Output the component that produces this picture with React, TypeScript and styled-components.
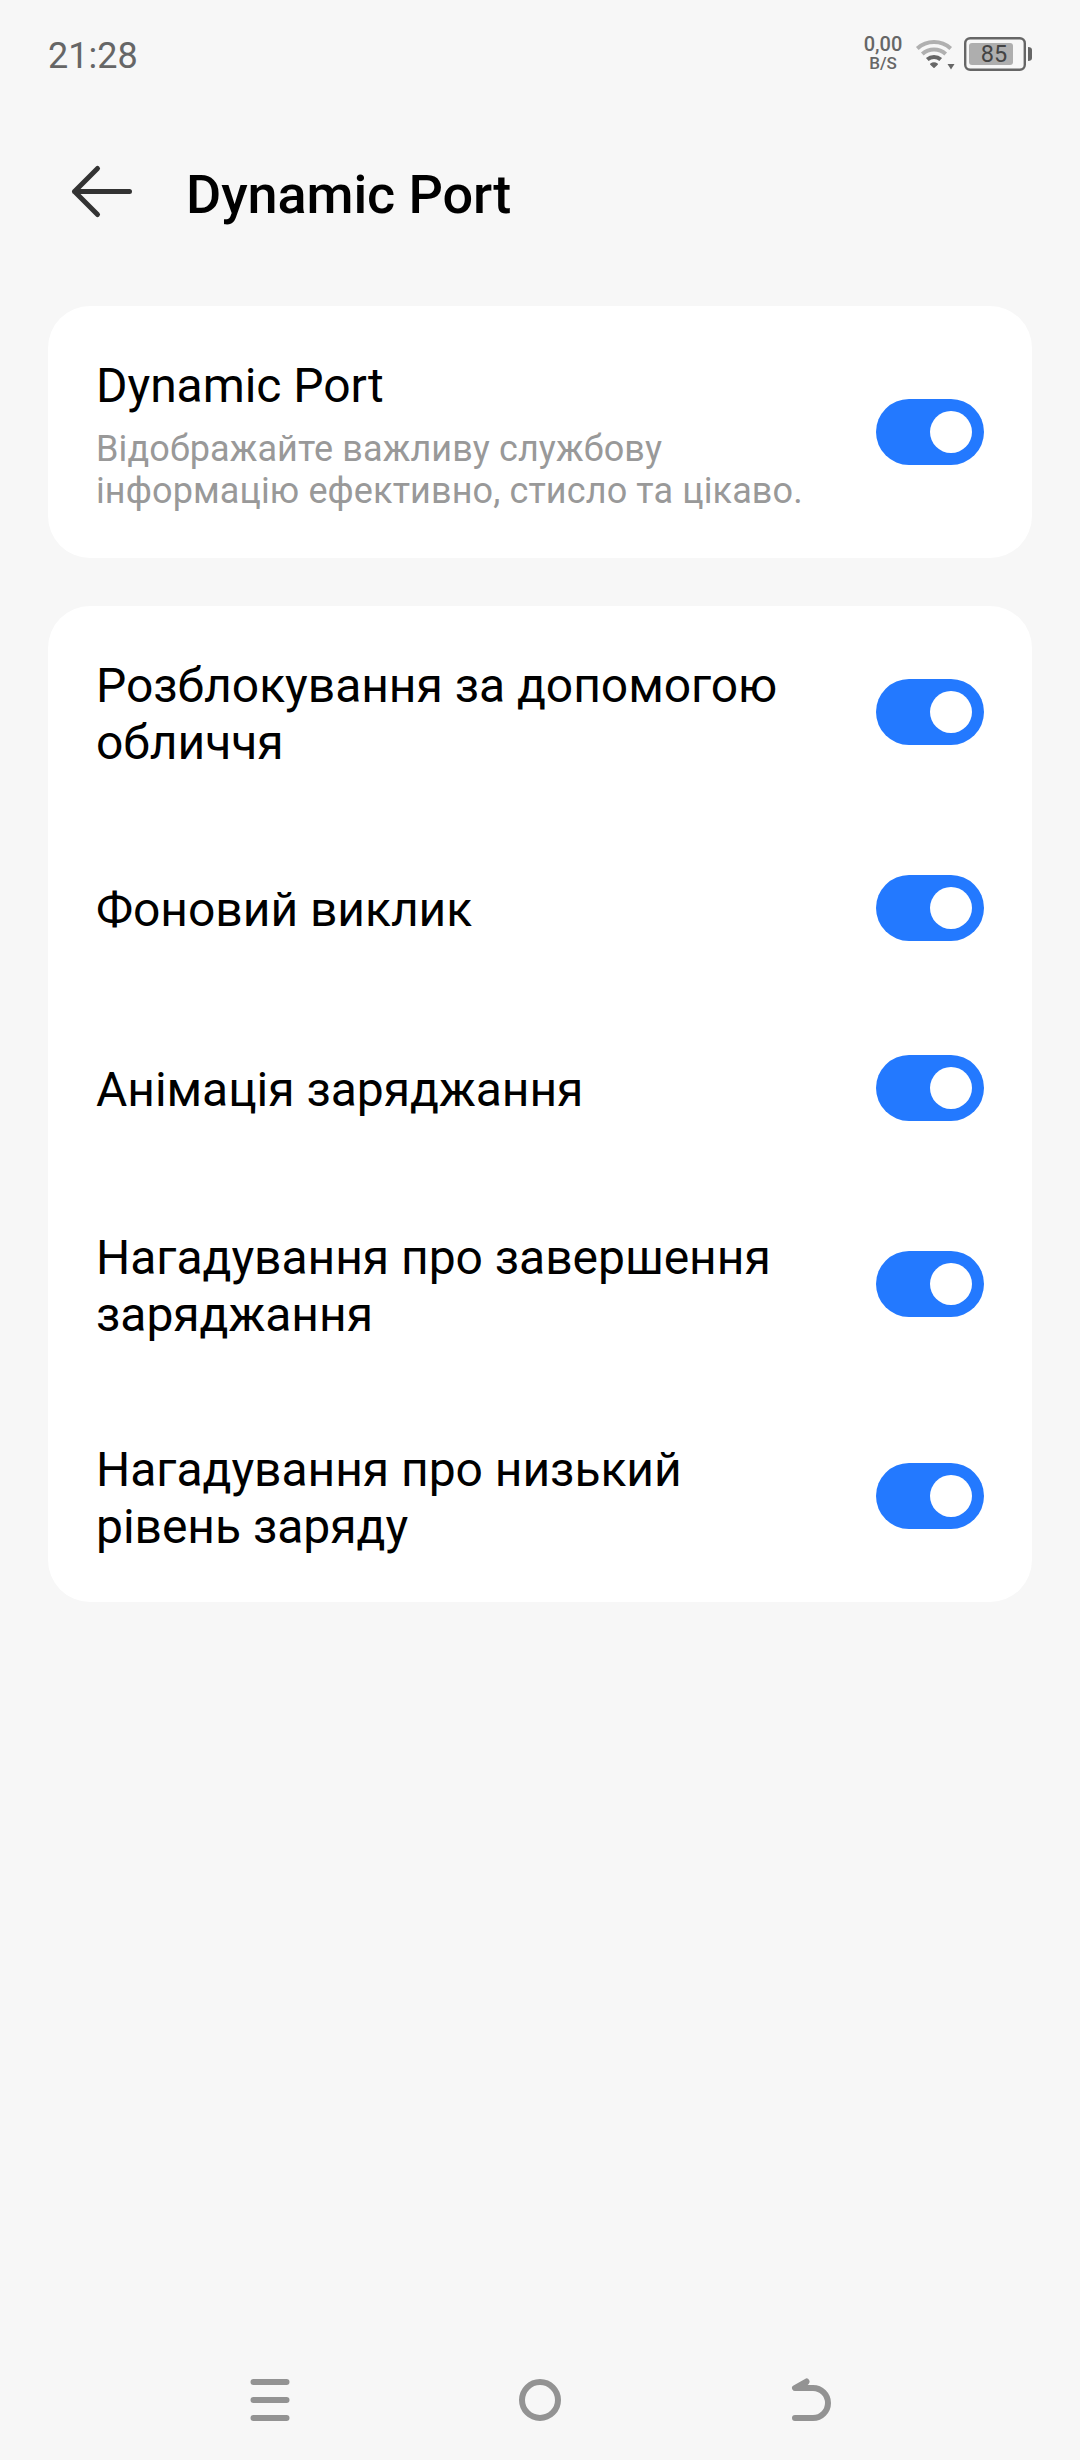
import React, { useState } from "react";
import styled, { createGlobalStyle } from "styled-components";

const GlobalStyle = createGlobalStyle`
  * { box-sizing: border-box; }
  body { margin: 0; background: #f7f7f7; }
`;

const Screen = styled.div`
  display: flex;
  flex-direction: column;
  width: 1080px;
  height: 2460px;
  background: #f7f7f7;
  color: #000;
  font-family: Roboto, "Noto Sans", sans-serif;
`;

const StatusBar = styled.header`
  display: flex;
  justify-content: space-between;
  align-items: center;
  height: 108px;
  padding: 0 48px;
  color: #666;
`;

const Clock = styled.time`
  font-size: 36px;
  line-height: 42px;
  padding-top: 4px;
`;

const StatusIcons = styled.div`
  display: flex;
  align-items: center;
  gap: 8px;
`;

const NetSpeed = styled.div`
  display: flex;
  flex-direction: column;
  align-items: center;
  width: 42px;
  padding-bottom: 2px;
  font-weight: 500;
`;

const SpeedValue = styled.span`
  font-size: 20px;
  line-height: 20px;
`;

const SpeedUnit = styled.span`
  font-size: 17px;
  line-height: 18px;
`;

const TitleBar = styled.div`
  display: flex;
  align-items: center;
  height: 168px;
  padding-left: 66px;
`;

const BackButton = styled.button`
  display: flex;
  width: 72px;
  height: 72px;
  padding: 0;
  border: 0;
  background: none;
  margin: 0 48px 0 0;
`;

const Title = styled.h1`
  margin: 0;
  padding-top: 6px;
  font-size: 54px;
  line-height: 64px;
  font-weight: 500;
  letter-spacing: -0.1px;
`;

const Content = styled.main`
  display: flex;
  flex: 1;
  flex-direction: column;
  gap: 48px;
  padding: 30px 48px 0;
`;

const Card = styled.section`
  border-radius: 42px;
  background: #fff;
`;

const Row = styled.div<{ $height: number }>`
  display: flex;
  align-items: center;
  justify-content: space-between;
  height: ${(p) => p.$height}px;
  padding: 0 48px;
`;

const Texts = styled.div<{ $top: number }>`
  width: 732px;
  padding-top: ${(p) => p.$top}px;
`;

const Label = styled.div`
  font-size: 48px;
  line-height: 57px;
  letter-spacing: -0.04px;
`;

const Summary = styled.div`
  margin-top: 14px;
  font-size: 36px;
  line-height: 42px;
  letter-spacing: 0.12px;
  color: #999;
`;

const Track = styled.button<{ $on: boolean }>`
  display: flex;
  align-items: center;
  justify-content: ${(p) => (p.$on ? "flex-end" : "flex-start")};
  width: 108px;
  height: 66px;
  padding: 0 12px;
  border: 0;
  border-radius: 33px;
  background: ${(p) => (p.$on ? "#2379ff" : "#ddd")};
`;

const Knob = styled.span`
  width: 42px;
  height: 42px;
  border-radius: 50%;
  background: #fff;
`;

const NavBar = styled.nav`
  display: flex;
  align-items: center;
  justify-content: space-around;
  height: 120px;
  padding: 0 135px;
`;

const NavButton = styled.button`
  display: flex;
  padding: 0;
  border: 0;
  background: none;
`;

function Switch() {
  const [on, setOn] = useState(true);
  return (
    <Track $on={on} role="switch" aria-checked={on} onClick={() => setOn(!on)}>
      <Knob />
    </Track>
  );
}

const options = [
  { label: "Розблокування за допомогою обличчя", height: 212, top: 4 },
  { label: "Фоновий виклик", height: 180, top: 3 },
  { label: "Анімація заряджання", height: 180, top: 3 },
  { label: "Нагадування про завершення заряджання", height: 212, top: 4 },
  { label: "Нагадування про низький рівень заряду", height: 212, top: 4 },
];

const WifiIcon = () => (
  <svg width="44" height="36" viewBox="0 0 44 36" fill="none">
    <path d="M5.300 12.400A25 25 0 0 1 38.700 12.400" stroke="#b0b0b0" strokeWidth="4" />
    <path d="M10.300 18A17.500 17.500 0 0 1 33.700 18" stroke="#b0b0b0" strokeWidth="4" />
    <path d="M15.300 23.600A10 10 0 0 1 28.700 23.600" stroke="#666" strokeWidth="4" />
    <path d="M18.800 28.200q3.200-2.400 6.400 0L22 31.200z" fill="#666" stroke="#666" strokeWidth="1.500" strokeLinejoin="round" />
    <path d="M35.500 28h7l-3.500 5.500z" fill="#666" />
  </svg>
);

const BatteryIcon = () => (
  <svg width="68" height="36" viewBox="0 0 68 36">
    <rect x="1.200" y="2.200" width="59.600" height="31.600" rx="5" fill="none" stroke="#666" strokeWidth="2.400" />
    <rect x="5" y="7" width="44" height="22" rx="3" fill="#aeaeae" />
    <path d="M64 11q4 0 4 3v8q0 3-4 3z" fill="#666" />
    <text x="30" y="26" textAnchor="middle" fontFamily="Roboto, sans-serif" fontSize="23.500" fill="#444">85</text>
  </svg>
);

export default function App() {
  return (
    <>
      <GlobalStyle />
      <Screen>
        <StatusBar>
          <Clock>21:28</Clock>
          <StatusIcons>
            <NetSpeed>
              <SpeedValue>0,00</SpeedValue>
              <SpeedUnit>B/S</SpeedUnit>
            </NetSpeed>
            <WifiIcon />
            <BatteryIcon />
          </StatusIcons>
        </StatusBar>
        <TitleBar>
          <BackButton aria-label="Назад">
            <svg width="72" height="72" viewBox="66 156 72 72" fill="none" stroke="#333" strokeWidth="5" strokeLinecap="round" strokeLinejoin="round">
              <path d="M97.500 168.500L74.500 191.500L97.500 214.500M74.500 191.500H129.500" />
            </svg>
          </BackButton>
          <Title>Dynamic Port</Title>
        </TitleBar>
        <Content>
          <Card>
            <Row $height={252}>
              <Texts $top={5}>
                <Label>Dynamic Port</Label>
                <Summary>Відображайте важливу службову інформацію ефективно, стисло та цікаво.</Summary>
              </Texts>
              <Switch />
            </Row>
          </Card>
          <Card>
            {options.map((o) => (
              <Row key={o.label} $height={o.height}>
                <Texts $top={o.top}>
                  <Label>{o.label}</Label>
                </Texts>
                <Switch />
              </Row>
            ))}
          </Card>
        </Content>
        <NavBar>
          <NavButton aria-label="Меню">
            <svg width="60" height="60" viewBox="0 0 60 60" stroke="#939393" strokeWidth="6" strokeLinecap="round">
              <path d="M13.500 12H46.500M13.500 30H46.500M13.500 48H46.500" />
            </svg>
          </NavButton>
          <NavButton aria-label="Додому">
            <svg width="60" height="60" viewBox="0 0 60 60" fill="none" stroke="#939393" strokeWidth="6">
              <circle cx="30" cy="30" r="18" />
            </svg>
          </NavButton>
          <NavButton aria-label="Назад">
            <svg width="60" height="60" viewBox="0 0 60 60" fill="none" stroke="#939393" strokeWidth="6" strokeLinecap="round" strokeLinejoin="round">
              <path d="M26.500 11.500L15 18H33a15 15 0 0 1 0 30H15M21 17.500L26 12.500" />
            </svg>
          </NavButton>
        </NavBar>
      </Screen>
    </>
  );
}
